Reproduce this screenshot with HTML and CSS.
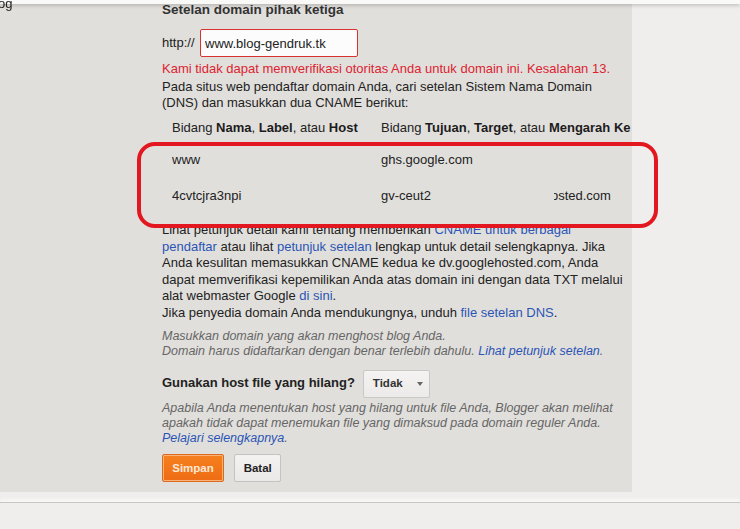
FILE: index.html
```html
<!DOCTYPE html>
<html lang="id">
<head>
<meta charset="utf-8">
<title>Setelan domain pihak ketiga</title>
<link rel="stylesheet" href="styles.css">
</head>
<body>
<div class="topbar"></div>
<div class="panel">
  <nav class="nav"><span class="nav-item">Blog</span></nav>
  <main class="content">
    <h3 class="title">Setelan domain pihak ketiga</h3>
    <div class="url-row">
      <span>http://</span>
      <input class="url-input" type="text" value="www.blog-gendruk.tk">
    </div>
    <p class="error">Kami tidak dapat memverifikasi otoritas Anda untuk domain ini. Kesalahan 13.</p>
    <p class="intro">Pada situs web pendaftar domain Anda, cari setelan Sistem Nama Domain (DNS) dan masukkan dua CNAME berikut:</p>
    <div class="dns">
      <div>Bidang <b>Nama</b>, <b>Label</b>, atau <b>Host</b></div>
      <div>Bidang <b>Tujuan</b>, <b>Target</b>, atau <b>Mengarah Ke</b></div>
      <div>www</div>
      <div>ghs.google.com</div>
      <div>4cvtcjra3npi</div>
      <div>gv-ceut2<span class="clip"><span>dv.googlehosted.com</span></span></div>
    </div>
    <p class="details">Lihat petunjuk detail kami tentang memberikan <a href="#">CNAME untuk berbagai pendaftar</a> atau lihat <a href="#">petunjuk setelan</a> lengkap untuk detail selengkapnya. Jika Anda kesulitan memasukkan CNAME kedua ke dv.googlehosted.com, Anda dapat memverifikasi kepemilikan Anda atas domain ini dengan data TXT melalui alat webmaster Google <a href="#">di sini</a>.<br>Jika penyedia domain Anda mendukungnya, unduh <a href="#">file setelan DNS</a>.</p>
    <p class="help">Masukkan domain yang akan menghost blog Anda.<br>Domain harus didaftarkan dengan benar terlebih dahulu. <a href="#">Lihat petunjuk setelan</a>.</p>
    <div class="host-row">
      <span class="host-label">Gunakan host file yang hilang?</span>
      <div class="select"><span>Tidak</span><span class="caret"></span></div>
    </div>
    <p class="help help2">Apabila Anda menentukan host yang hilang untuk file Anda, Blogger akan melihat apakah tidak dapat menemukan file yang dimaksud pada domain reguler Anda. <a href="#">Pelajari selengkapnya</a>.</p>
    <div class="actions">
      <button class="btn btn-primary" type="button">Simpan</button>
      <button class="btn btn-default" type="button">Batal</button>
    </div>
  </main>
</div>
<div class="footer"></div>
<div class="annot"></div>
</body>
</html>
```

FILE: styles.css
```css
* { box-sizing: border-box; }
html, body { margin: 0; padding: 0; }
body {
  background: #efeeec;
  font-family: "Liberation Sans", Arial, sans-serif;
  font-size: 13px;
  line-height: 16.5px;
  color: #222;
  width: 740px;
  height: 529px;
  overflow: hidden;
}
.topbar {
  position: fixed;
  top: 0; left: 0; right: 0;
  height: 4px;
  background: #f9f9f8;
  box-shadow: 0 1px 4px rgba(0,0,0,.25);
  z-index: 1;
}
.panel {
  width: 632px;
  background: #e1dfdc;
  display: flex;
  padding-bottom: 10.4px;
}
.nav { width: 162px; flex: none; }
.nav-item {
  display: block;
  position: relative;
  z-index: 2;
  margin: -4.5px 0 0 -13.6px;
  color: #222;
}
.content { width: 464px; flex: none; padding-top: 2.3px; }
.title {
  margin: 0;
  font-size: 13.5px;
  font-weight: bold;
  line-height: 16.5px;
  color: #333;
}
.url-row {
  display: flex;
  align-items: center;
  height: 28px;
  margin-top: 10.5px;
}
.url-input {
  margin: 0 0 0 5.5px;
  width: 158px;
  height: 28px;
  border: 1px solid #d8332f;
  border-radius: 2px;
  padding: 0 4px;
  font: 13px "Liberation Sans", Arial, sans-serif;
  color: #222;
  background: #fcfcfc;
  outline: none;
}
.error { margin: 3.8px 0 0; color: #dc2430; }
.intro { margin: 1.2px 0 0; }
.dns {
  display: grid;
  grid-template-columns: 209px auto;
  grid-template-rows: 31.3px 36.7px 33.9px;
  margin: 8.7px 0 0 10px;
  white-space: nowrap;
}
.dns b { color: #1c1c1c; }
.clip {
  display: inline-flex;
  justify-content: flex-end;
  width: 57px;
  overflow: hidden;
  margin-left: 123px;
  vertical-align: top;
}
.clip span { flex: none; }
.details { margin: 0; }
a { color: #2b55b5; text-decoration: none; }
.help {
  margin: 7.8px 0 0;
  font-style: italic;
  font-size: 12.5px;
  color: #666;
  line-height: 15px;
}
.host-row {
  display: flex;
  align-items: center;
  margin-top: 10.4px;
}
.host-label { font-weight: bold; color: #222; }
.select {
  margin-left: 8px;
  display: flex;
  align-items: center;
  width: 67px;
  height: 28px;
  padding: 0 0 0 9px;
  border: 1px solid #c9c8c6;
  border-radius: 2px;
  background: linear-gradient(#f4f3f2, #ecebea);
  font-weight: bold;
  font-size: 11.5px;
  color: #333;
}
.caret {
  margin-left: 14px;
  width: 0; height: 0;
  border-left: 3.5px solid transparent;
  border-right: 3.5px solid transparent;
  border-top: 4px solid #666;
}
.help2 { margin-top: 3.2px; }
.actions { display: flex; gap: 10px; margin-top: 7.8px; }
.btn {
  height: 28px;
  padding: 0;
  border-radius: 2px;
  font: bold 11.5px "Liberation Sans", Arial, sans-serif;
}
.btn-primary {
  width: 62px;
  background: linear-gradient(#f6801f, #ee6c14);
  border: 1px solid #dc6a1d;
  box-shadow: inset 0 0 0 1px #f7b37a;
  color: #fbe9d8;
}
.btn-default {
  width: 47.4px;
  background: linear-gradient(#f3f2f1, #eae9e7);
  border: 1px solid #c4c3c1;
  color: #222;
}
.footer {
  margin-top: 10px;
  height: 40px;
  border-top: 1px solid #c6c6c6;
  box-shadow: 0 -3px 3px rgba(255,255,255,.5);
}
.annot {
  position: absolute;
  left: 137px;
  top: 142px;
  width: 521px;
  height: 85.5px;
  border: 4px solid #e3171f;
  border-radius: 18px;
}
```
